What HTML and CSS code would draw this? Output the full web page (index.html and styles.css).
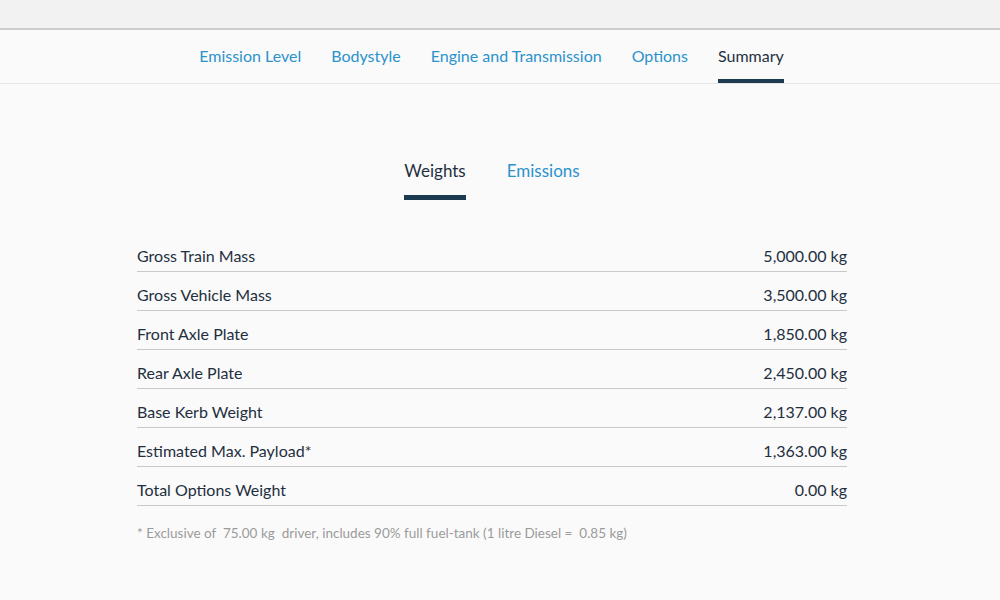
FILE: index.html
```html
<!DOCTYPE html>
<html lang="en">
<head>
<meta charset="utf-8">
<title>Summary</title>
<link rel="stylesheet" href="styles.css">
</head>
<body>
<div class="topbar"></div>
<nav class="nav">
  <div class="nav-inner">
    <a class="nav-item">Emission Level</a>
    <a class="nav-item">Bodystyle</a>
    <a class="nav-item">Engine and Transmission</a>
    <a class="nav-item">Options</a>
    <a class="nav-item active">Summary</a>
  </div>
</nav>
<main class="main">
  <div class="tabs">
    <a class="tab active">Weights</a>
    <a class="tab">Emissions</a>
  </div>
  <div class="table">
    <div class="row"><span>Gross Train Mass</span><span>5,000.00 kg</span></div>
    <div class="row"><span>Gross Vehicle Mass</span><span>3,500.00 kg</span></div>
    <div class="row"><span>Front Axle Plate</span><span>1,850.00 kg</span></div>
    <div class="row"><span>Rear Axle Plate</span><span>2,450.00 kg</span></div>
    <div class="row"><span>Base Kerb Weight</span><span>2,137.00 kg</span></div>
    <div class="row"><span>Estimated Max. Payload*</span><span>1,363.00 kg</span></div>
    <div class="row"><span>Total Options Weight</span><span>0.00 kg</span></div>
    <p class="note">* Exclusive of &nbsp;75.00 kg &nbsp;driver, includes 90% full fuel-tank (1 litre Diesel = &nbsp;0.85 kg)</p>
  </div>
</main>
</body>
</html>
```
FILE: styles.css
```css
html, body {
  margin: 0;
  padding: 0;
}
body {
  background: #fafafa;
  font-family: Lato, "Open Sans", sans-serif;
  color: #1f2f3f;
  height: 600px;
  overflow: hidden;
}
.topbar {
  height: 28px;
  background: #f2f2f2;
  border-bottom: 2px solid #cdcdcd;
}
.nav {
  height: 53px;
  background: #fafafa;
  border-bottom: 1px solid #e6e6e6;
}
.nav-inner {
  display: flex;
  justify-content: center;
  gap: 30px;
  padding-right: 17px;
}
.nav-item {
  font-size: 16px;
  line-height: 20px;
  padding: 16px 0 13px;
  border-bottom: 4px solid transparent;
  color: #2b92cc;
}
.nav-item.active {
  color: #1f2f3f;
  border-bottom-color: #1c3a50;
}
.main {
  padding-right: 16px;
  display: flex;
  flex-direction: column;
  align-items: center;
}
.tabs {
  display: flex;
  gap: 41px;
  margin-top: 76px;
}
.tab {
  font-size: 17px;
  line-height: 22px;
  padding-bottom: 13px;
  border-bottom: 5px solid transparent;
  color: #2b92cc;
}
.tab.active {
  color: #1f2f3f;
  border-bottom-color: #1c3a50;
}
.table {
  width: 710px;
  margin-top: 33px;
}
.row {
  display: flex;
  justify-content: space-between;
  font-size: 16px;
  line-height: 20px;
  padding: 13px 0 5px;
  border-bottom: 1px solid #c9c9c9;
}
.note {
  margin: 18px 0 0;
  font-size: 13.5px;
  line-height: 18px;
  color: #9a9a9a;
}
```
